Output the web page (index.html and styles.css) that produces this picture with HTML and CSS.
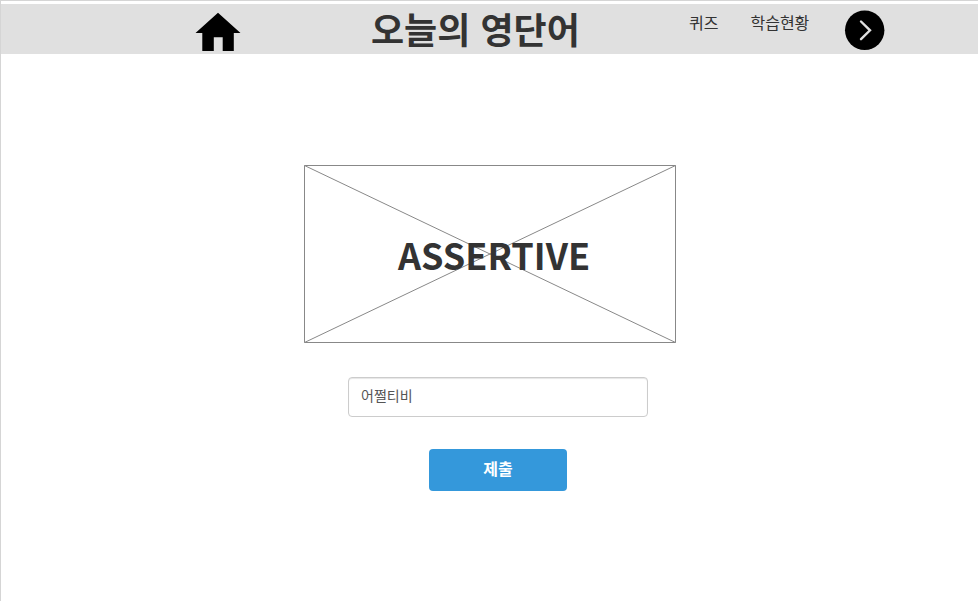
FILE: index.html
```html
<!DOCTYPE html>
<html lang="ko">
<head>
<meta charset="utf-8">
<title>오늘의 영단어</title>
<link rel="stylesheet" href="styles.css">
</head>
<body>
<div class="page">
  <header class="bar">
    <a class="home" aria-label="홈"><svg width="44" height="38" viewBox="0 0 44 38"><path d="M22 -.3L44.500 20H37.800V38H26.700V24.200H17.800V38H6.300V20H-.5Z"/></svg></a>
    <h1 class="title">오늘의 영단어</h1>
    <nav class="nav"><a>퀴즈</a><a>학습현황</a></nav>
    <a class="next" aria-label="다음"><svg width="40" height="40" viewBox="0 0 40 40"><circle cx="19.700" cy="20.200" r="19.700"/><path class="chevron" d="M16 11.500L25 20.300L16 29.200"/></svg></a>
  </header>
  <main class="quiz">
    <div class="card">
      <svg class="cross" viewBox="0 0 372 178"><path d="M.5 .5H371.500V177.500H.5Z M.5 .5L371.500 177.500M.5 177.500L371.500 .5"/></svg>
      <h2 class="word">ASSERTIVE</h2>
    </div>
    <input class="answer" type="text" value="어쩔티비">
    <button class="submit">제출</button>
  </main>
</div>
</body>
</html>
```
FILE: styles.css
```css
* { box-sizing: border-box; }
body { margin: 0; background: #fff; color: #333; font-family: "Noto Sans CJK KR", sans-serif; }
.page { height: 601px; overflow: hidden; border-top: 1px solid #d5d5d5; border-left: 1px solid #d5d5d5; padding-top: 3px; }
.bar { display: flex; align-items: flex-start; height: 50px; background: #e0e0e0; padding-left: 195px; }
.bar svg { display: block; overflow: visible; }
.home { width: 44px; padding-top: 9px; }
.title { width: 209px; margin: 0 0 0 131px; font-size: 36px; line-height: 48px; font-weight: 700; white-space: nowrap; }
.nav { display: flex; gap: 32px; width: 156px; margin-left: 109px; font-size: 16px; line-height: 37px; white-space: nowrap; }
.next { padding-top: 6px; }
.chevron { fill: none; stroke: #e0e0e0; stroke-width: 2.400; stroke-linecap: round; }
.quiz { display: flex; flex-direction: column; align-items: flex-start; padding: 111px 0 0 303px; }
.card { display: grid; width: 372px; height: 178px; }
.cross, .word { grid-area: 1 / 1; }
.cross { width: 372px; height: 178px; fill: none; stroke: #888; stroke-width: 1; }
.word { margin: 0 0 0 94px; font-size: 36px; line-height: 178px; font-weight: 700; height: 178px; }
.answer { width: 300px; height: 40px; margin: 34px 0 0 44px; padding: 0 12px 4px; border: 1px solid #ccc; border-radius: 4px; box-shadow: inset 0 1px 1px rgba(0,0,0,.1); font: 14px "Noto Sans CJK KR", sans-serif; color: #555; }
.submit { width: 138px; height: 42px; margin: 32px 0 0 125px; padding: 0 0 4px; border: 0; border-radius: 4px; background: #3498db; color: #fff; font: 700 16px "Noto Sans CJK KR", sans-serif; }
```
